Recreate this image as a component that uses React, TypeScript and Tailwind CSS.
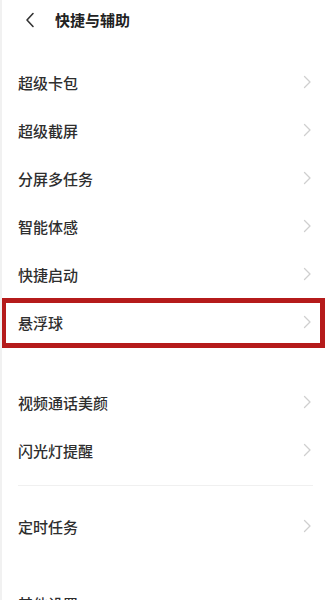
import React from "react";

const font = { fontFamily: '"Noto Sans CJK SC", "Noto Sans", sans-serif' };

function Chevron() {
  return (
    <svg width="9" height="14" viewBox="0 0 9 14" fill="none" className="shrink-0">
      <path d="M1.5 1.5 L7 7 L1.5 12.5" stroke="#cfcfcf" strokeWidth="1.3" strokeLinecap="round" strokeLinejoin="round" />
    </svg>
  );
}

function Row({ label, marked }: { label: string; marked?: boolean }) {
  return (
    <div className="relative flex h-[48px] items-center justify-between pl-[16px] pr-[17px]">
      <span className="text-[15px] font-medium leading-none text-[#2e2e2e]">{label}</span>
      <Chevron />
      {marked ? (
        <div className="pointer-events-none absolute left-[-1px] right-[4px] top-[0px] bottom-[-2px] border-[5px] border-[#b51b1b]" />
      ) : null}
    </div>
  );
}

export default function App() {
  const group1 = ["超级卡包", "超级截屏", "分屏多任务", "智能体感", "快捷启动"];
  return (
    <div className="h-[600px] w-[329px] overflow-hidden border-l-2 border-[#f1f1f1] bg-white" style={font}>
      <div className="flex h-[40px] items-center pl-[22px]">
        <svg width="12" height="16" viewBox="0 0 12 16" fill="none">
          <path d="M9 1.5 L3 8 L9 14.5" stroke="#333" strokeWidth="1.6" strokeLinecap="round" strokeLinejoin="round" />
        </svg>
        <span className="ml-[19px] text-[15px] font-bold text-[#222]">快捷与辅助</span>
      </div>

      <div className="pt-[18px]">
        {group1.map((l) => (
          <Row key={l} label={l} />
        ))}
        <Row label="悬浮球" marked />
      </div>

      <div className="pt-[32px]">
        <Row label="视频通话美颜" />
        <Row label="闪光灯提醒" />
      </div>

      <div className="mx-[16px] mt-[11px] h-px bg-[#f0f0f0]" />

      <div className="pt-[16px]">
        <Row label="定时任务" />
      </div>

      <div className="pl-[16px] pt-[46px] text-[15px] font-medium leading-none text-[#2e2e2e]">其他设置</div>
    </div>
  );
}
